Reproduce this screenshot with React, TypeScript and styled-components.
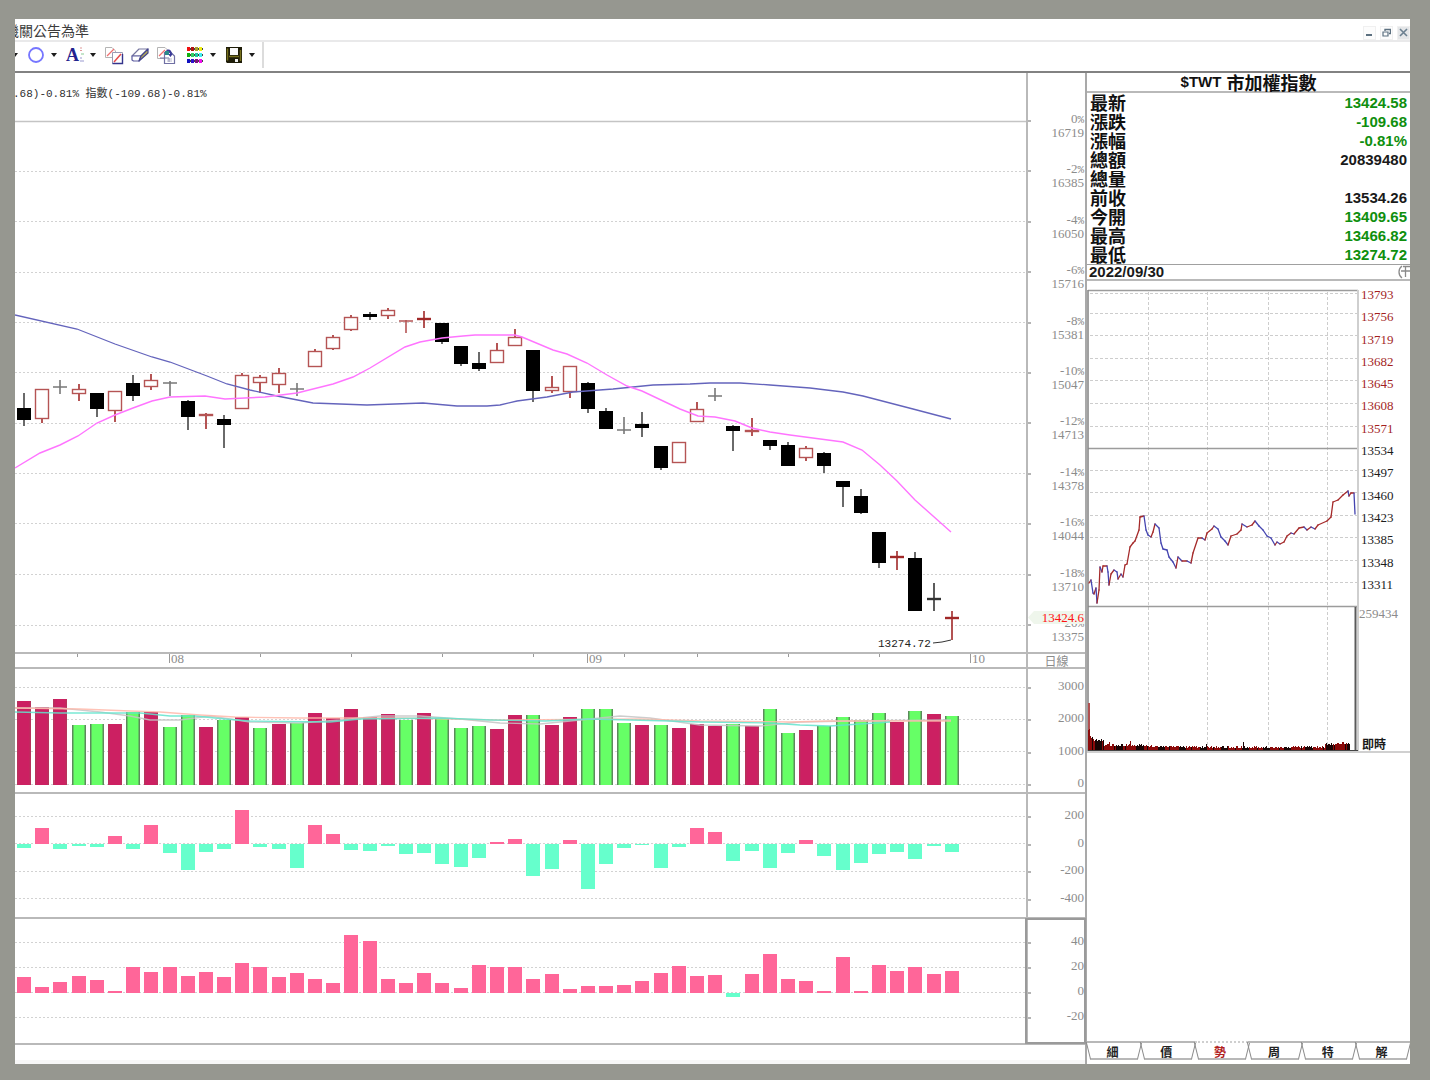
import React from "react";
import styled, { createGlobalStyle } from "styled-components";

const SANS = '"Liberation Sans", "Noto Sans CJK TC", sans-serif';
const SERIF = '"Liberation Serif", "Noto Sans CJK TC", serif';
const MONO = '"Liberation Mono", "Noto Sans CJK TC", monospace';
const CJK = '"Noto Sans CJK TC", sans-serif';

const LINE = "#b9b9b9";
const DIM = "#8c8c8c";
const GRID = "#d2d2d2";
const RED = "#a52a2a";

const GlobalStyle = createGlobalStyle`
  *, *::before, *::after { box-sizing: border-box; }
  body { margin: 0; background: #969790; font-family: ${SANS}; }
  button { appearance: none; border: 0; margin: 0; padding: 0; background: none; font: inherit; color: inherit; }
`;

const Desktop = styled.div`
  min-height: 100vh;
  padding: 19px 20px 16px 15px;
  display: flex;
  background: #969790;
`;

const Window = styled.main`
  flex: 1;
  min-width: 0;
  display: flex;
  flex-direction: column;
  overflow: hidden;
  background: #fff;
`;

const TitleBar = styled.header`
  height: 23px;
  display: flex;
  align-items: center;
  justify-content: space-between;
  border-bottom: 2px solid #e9e9ea;
`;

const TitleText = styled.div`
  width: 74px;
  display: flex;
  justify-content: flex-end;
  overflow: hidden;
  white-space: nowrap;
  font: 14px/20px ${CJK};
  color: #3c3c3c;
`;

const WindowButtons = styled.div`
  display: flex;
  gap: 4px;
  padding-top: 6px;
`;

const WindowButton = styled.button<{ $shaded?: boolean }>`
  width: 13px;
  height: 14px;
  display: grid;
  place-items: center;
  border: 1px solid #f0f0f0;
  background: ${(p) => (p.$shaded ? "#e4e6e8" : "#fcfcfc")};
`;

const Toolbar = styled.div`
  height: 31px;
  display: flex;
  align-items: center;
  gap: 3px;
  padding-bottom: 4px;
  border-bottom: 2px solid #828282;
`;

const ToolGroup = styled.div`
  display: flex;
  align-items: center;
`;

const ToolButton = styled.button`
  width: 26px;
  height: 20px;
  display: grid;
  place-items: center;
`;

const CaretButton = styled.button<{ $cut?: boolean }>`
  width: 10px;
  height: 20px;
  display: grid;
  place-items: center;
  margin-left: ${(p) => (p.$cut ? "-5px" : "0")};
`;

const ToolDivider = styled.div`
  width: 2px;
  height: 26px;
  margin-left: 2px;
  background: #dcdcdc;
`;

const Body = styled.div`
  flex: 1;
  display: flex;
`;

const Charts = styled.section`
  flex: 1;
  min-width: 0;
  display: flex;
  flex-direction: column;
`;

const Pane = styled.div<{ $h: number }>`
  height: ${(p) => p.$h}px;
  display: flex;
  border-bottom: 2px solid ${LINE};
`;

const Plot = styled.div`
  position: relative;
  flex: 1;
  min-width: 0;
  display: flex;
  justify-content: flex-end;
  overflow-x: clip;
  overflow-y: visible;
  svg { flex: none; display: block; overflow: visible; }
`;

const Caption = styled.div`
  position: absolute;
  left: -2px;
  top: 13px;
  white-space: nowrap;
  font: 11px/16px ${MONO};
  color: #303030;
`;

const Axis = styled.div<{ $top: number; $focus?: boolean }>`
  position: relative;
  width: 59px;
  flex: none;
  padding-top: ${(p) => p.$top}px;
  border-left: 2px solid ${LINE};
  ${(p) => p.$focus && `outline: 2px solid #9a9a9a; outline-offset: -1px;`}
`;

const AxisLabels = styled.div<{ $h: number }>`
  height: ${(p) => p.$h}px;
  display: flex;
  flex-direction: column;
  justify-content: space-between;
  text-align: right;
  font: 13px/14px ${SERIF};
  color: ${DIM};
`;

const AxisLabel = styled.div`
  position: relative;
  padding-right: 1px;
  &::before {
    content: "";
    position: absolute;
    left: 0;
    top: 8px;
    width: 3px;
    height: 2px;
    background: #b4b4b4;
  }
`;

const PercentValue = styled.div`
  height: 14px;
`;

const Percent = styled.span`
  font: 11px/11px ${MONO};
`;

const PriceTag = styled.div`
  position: absolute;
  left: 0;
  right: 0;
  top: 538px;
  height: 13px;
  padding-right: 1px;
  text-align: right;
  font: 13px/13px ${SERIF};
  color: #ff1414;
  background: #eff6ec;
  clip-path: polygon(0 50%, 6px 0, 100% 0, 100% 100%, 6px 100%);
`;

const PeriodCell = styled.div`
  width: 59px;
  flex: none;
  text-align: center;
  border-left: 2px solid ${LINE};
  font: 12px/13px ${CJK};
  color: ${DIM};
`;

const StatusStrip = styled.div`
  flex: 1;
  border-bottom: 4px solid #f7f7f7;
`;

const SidePanel = styled.aside`
  width: 325px;
  flex: none;
  display: flex;
  flex-direction: column;
  border-left: 2px solid #a9a9a9;
`;

const SymbolTitle = styled.h1`
  height: 20px;
  margin: 0;
  display: flex;
  align-items: center;
  justify-content: center;
  gap: 5px;
  border-bottom: 2px solid ${LINE};
  font: bold 15px/18px ${SANS};
  color: #111;
`;

const SymbolName = styled.span`
  font: bold 18px/18px ${CJK};
`;

const QuoteTable = styled.table`
  width: 100%;
  border-collapse: collapse;
`;

const QuoteLabel = styled.th`
  height: 19px;
  padding: 0 0 0 3px;
  text-align: left;
  font: bold 18px/19px ${CJK};
  color: #111;
`;

const QuoteValue = styled.td<{ $down?: boolean }>`
  padding: 0 3px 0 0;
  text-align: right;
  font: bold 15px/19px ${SANS};
  color: ${(p) => (p.$down ? "#0e8f0e" : "#1a1a1a")};
`;

const DateRow = styled.div`
  height: 17px;
  display: flex;
  align-items: center;
  justify-content: space-between;
  padding-left: 2px;
  overflow: hidden;
  border-top: 1px solid #a0a0a0;
  border-bottom: 2px solid ${LINE};
  font: bold 15px/14px ${SANS};
  color: #1a1a1a;
`;

const Intraday = styled.div`
  display: flex;
  border-bottom: 2px solid #d0d0d0;
  svg { flex: none; display: block; }
`;

const IntradayScale = styled.div`
  flex: 1;
  display: flex;
  flex-direction: column;
  justify-content: space-between;
  padding-top: 7px;
  font: 13px/14px ${SERIF};
`;

const PriceScale = styled.div`
  height: 304px;
  display: flex;
  flex-direction: column;
  justify-content: space-between;
  padding-left: 2px;
`;

const PriceMark = styled.div<{ $up?: boolean }>`
  color: ${(p) => (p.$up ? "#a31f1f" : "#1c1c1c")};
`;

const VolumeScale = styled.div`
  height: 144px;
  display: flex;
  flex-direction: column;
  justify-content: space-between;
  color: ${DIM};
`;

const LiveTag = styled.div`
  padding-left: 3px;
  font: bold 12px/14px ${CJK};
  color: #1a1a1a;
`;

const Tabs = styled.nav`
  display: flex;
  margin-top: auto;
  margin-bottom: 4px;
`;

const Tab = styled.button<{ $active?: boolean }>`
  position: relative;
  flex: 1;
  height: 19px;
  padding-right: 3px;
  border-top: 2px ${(p) => (p.$active ? "dotted #cfcfcf" : "solid #b8b8b8")};
  font: bold 12px/14px ${CJK};
  color: ${(p) => (p.$active ? "#b02020" : "#222")};
  &::before, &::after {
    content: "";
    position: absolute;
    top: -1px;
    bottom: 0;
    border-bottom: 2px solid #b8b8b8;
  }
  &::before {
    left: 1px;
    right: 50%;
    border-left: 1px solid #8a8a8a;
    transform: skewX(14deg);
  }
  &::after {
    right: 1px;
    left: 50%;
    border-right: 1px solid #8a8a8a;
    transform: skewX(-14deg);
  }
`;

/* ---------- data ---------- */

const barX = (i: number) => Math.round(24 + i * 18.19);

// kind, high, body top, body bottom, low
type Candle = [string, number, number, number, number];
const candles: Candle[] = [
  ["k", 393, 408, 420, 426], ["r", 389, 389, 419, 423], ["g", 380, 387, 387, 394], ["r", 384, 389, 394, 401],
  ["k", 393, 393, 409, 417], ["r", 391, 391, 411, 422], ["k", 375, 383, 396, 401], ["r", 374, 380, 387, 390],
  ["g", 381, 383, 383, 396], ["k", 400, 401, 417, 430], ["r", 413, 414, 416, 429], ["k", 415, 419, 425, 448],
  ["r", 373, 375, 409, 409], ["r", 375, 377, 383, 393], ["r", 368, 373, 385, 393], ["g", 383, 389, 389, 396],
  ["r", 349, 351, 367, 367], ["r", 335, 337, 349, 350], ["r", 315, 317, 330, 331], ["k", 312, 314, 317, 320],
  ["r", 308, 310, 316, 319], ["m", 320, 321, 321, 333], ["c", 311, 319, 319, 328], ["k", 323, 323, 342, 344],
  ["k", 346, 346, 364, 366], ["k", 352, 363, 369, 371], ["r", 343, 350, 363, 363], ["r", 329, 337, 346, 346],
  ["k", 350, 350, 391, 402], ["r", 376, 387, 391, 393], ["r", 366, 366, 392, 398], ["k", 382, 383, 409, 413],
  ["k", 408, 411, 429, 429], ["g", 417, 430, 430, 434], ["k", 412, 424, 428, 437], ["k", 446, 446, 468, 470],
  ["r", 442, 442, 463, 463], ["r", 402, 409, 422, 422], ["g", 388, 396, 396, 401], ["k", 425, 426, 431, 451],
  ["r", 418, 430, 432, 436], ["k", 440, 440, 446, 450], ["k", 442, 445, 466, 466], ["r", 446, 448, 458, 461],
  ["k", 452, 453, 466, 473], ["k", 481, 481, 487, 507], ["k", 489, 496, 513, 514], ["k", 532, 532, 563, 568],
  ["c", 551, 557, 557, 570], ["k", 552, 558, 611, 611], ["b", 583, 599, 599, 611], ["c", 611, 618, 618, 640],
];

const maLong = "15,315 77,329 115,344 152,357 170,362 207,376 227,384 250,390 277,396 313,403 367,405 423,403 457,406 487,406 500,405 517,401 547,397 573,392 613,389 633,387 653,385 690,384 710,383 740,383 770,385 810,388 843,392 863,396 913,409 951,419";
const maShort = "15,468 40,453 60,445 78,436 97,423 115,415 133,408 152,401 170,397 205,396 225,399 245,398 265,397 297,393 333,384 353,377 370,368 405,347 420,342 442,338 463,336 475,335 515,335 522,337 553,350 567,354 587,363 607,375 627,386 642,391 680,409 698,416 715,417 735,421 752,428 770,432 790,435 843,442 862,450 880,465 897,481 915,500 951,532";

const volumeTops = [701, 707, 699, 725, 724, 724, 712, 712, 727, 715, 727, 720, 717, 728, 724, 723, 713, 718, 709, 717, 714, 720, 713, 718, 728, 726, 729, 715, 715, 725, 717, 709, 709, 723, 725, 725, 728, 724, 726, 724, 726, 709, 733, 730, 726, 717, 720, 713, 722, 711, 714, 716];
const volumeKinds = "RRRGGRGRGGRGRGRGRRRRRGRGGGRRGRRGGGRGRRRGRGGRGGGGRGRG";

const netFlow = [-4, 16, -5, -2, -3, 8, -5, 19, -9, -26, -8, -5, 34, -3, -5, -24, 19, 10, -6, -7, -2, -10, -9, -20, -23, -14, 2, 5, -32, -25, 4, -45, -20, -4, -1, -24, -3, 16, 12, -17, -7, -24, -9, 4, -12, -26, -19, -10, -8, -15, -2, -8];
const margin = [16, 6, 11, 17, 13, 2, 26, 21, 26, 17, 21, 16, 30, 26, 16, 20, 14, 10, 58, 52, 14, 10, 20, 10, 5, 28, 26, 26, 14, 19, 4, 7, 7, 8, 12, 20, 27, 17, 18, -4, 19, 39, 14, 12, 2, 36, 2, 28, 22, 26, 19, 22];

const priceAxis: [string, string][] = [
  ["0", "16719"], ["-2", "16385"], ["-4", "16050"], ["-6", "15716"], ["-8", "15381"], ["-10", "15047"],
  ["-12", "14713"], ["-14", "14378"], ["-16", "14044"], ["-18", "13710"], ["-20", "13375"],
];

const quotes: { label: string; value: string; down?: boolean }[] = [
  { label: "最新", value: "13424.58", down: true },
  { label: "漲跌", value: "-109.68", down: true },
  { label: "漲幅", value: "-0.81%", down: true },
  { label: "總額", value: "20839480" },
  { label: "總量", value: "" },
  { label: "前收", value: "13534.26" },
  { label: "今開", value: "13409.65", down: true },
  { label: "最高", value: "13466.82", down: true },
  { label: "最低", value: "13274.72", down: true },
];

const intradayMarks = [13793, 13756, 13719, 13682, 13645, 13608, 13571, 13534, 13497, 13460, 13423, 13385, 13348, 13311];

const intradayPath: [number, number][] = [
  [1089, 583], [1091, 580], [1093, 593], [1094, 594], [1096, 588], [1097, 603], [1099, 590], [1100, 567], [1102, 572], [1103, 566],
  [1107, 566], [1108, 572], [1109, 585], [1111, 574], [1114, 570], [1117, 572], [1118, 579], [1121, 574], [1123, 577], [1125, 565],
  [1127, 564], [1130, 547], [1133, 543], [1135, 541], [1139, 530], [1140, 517], [1144, 516], [1146, 530], [1148, 535], [1151, 537],
  [1153, 532], [1155, 524], [1159, 528], [1161, 543], [1163, 549], [1167, 550], [1169, 557], [1173, 562], [1176, 568], [1178, 557],
  [1182, 561], [1187, 561], [1191, 563], [1193, 553], [1198, 538], [1202, 538], [1205, 540], [1207, 533], [1212, 529], [1214, 526],
  [1218, 529], [1221, 537], [1225, 541], [1228, 545], [1231, 536], [1237, 534], [1241, 530], [1242, 524], [1247, 527], [1252, 525],
  [1255, 521], [1259, 526], [1263, 530], [1267, 536], [1271, 538], [1275, 545], [1277, 542], [1280, 544], [1284, 542], [1287, 536],
  [1291, 533], [1294, 534], [1299, 528], [1304, 527], [1307, 530], [1311, 527], [1315, 529], [1318, 525], [1327, 521], [1331, 517],
  [1333, 502], [1338, 500], [1343, 495], [1348, 491], [1349, 496], [1351, 493], [1354, 493], [1355, 514],
];

const tickVolume = Array.from({ length: 262 }, (_, i) => {
  const noise = (i * 37 + ((i * i) % 23) * 11) % 5;
  const opening = i < 2 ? 20 : i < 6 ? 15 - i : i < 16 ? 9 : i < 60 ? 4 : i < 90 ? 3 : 2;
  const closing = i > 250 ? 4 : i > 236 ? 3 : 0;
  const spike = i === 155 ? 5 : i === 118 ? 4 : i === 42 ? 5 : i === 21 ? 4 : 0;
  return opening + closing + spike + Math.floor(noise / 2);
});

/* ---------- drawings ---------- */

const Grid = ({ ys }: { ys: number[] }) => (
  <g stroke={GRID} strokeDasharray="2 2">
    {ys.map((y) => <line key={y} x1={-2985} x2={1026} y1={y + 0.5} y2={y + 0.5} />)}
  </g>
);

const CandleMark = ({ x, c }: { x: number; c: Candle }) => {
  const [kind, high, top, bottom, low] = c;
  if (kind === "k")
    return (
      <g>
        <rect x={x - 1} y={high} width={2} height={low - high} fill="#6a6a6a" />
        <rect x={x - 7} y={top} width={14} height={bottom - top} />
      </g>
    );
  if (kind === "r")
    return (
      <g stroke="#b55454" fill="none">
        <path strokeWidth={2} d={`M${x} ${high}V${top}M${x} ${bottom}V${low}`} />
        <rect x={x - 6.5} y={top + 0.5} width={13} height={bottom - top - 1} strokeWidth={1.4} fill="#fff" />
      </g>
    );
  const color = kind === "g" ? "#777" : kind === "b" ? "#333" : kind === "m" ? "#b55454" : "#a02828";
  const bar = kind === "g" || kind === "m" ? 1.5 : 2.4;
  return (
    <g stroke={color} fill="none">
      <path strokeWidth={1.6} d={`M${x} ${high}V${low}`} />
      <path strokeWidth={bar} d={`M${x - 7} ${top}H${x + 7}`} />
    </g>
  );
};

const PriceChart = () => (
  <svg width={1011} height={579} viewBox="15 73 1011 579" role="img" aria-label="指數">
    <line x1={-2985} x2={1026} y1={121.5} y2={121.5} stroke="#c4c4c4" strokeWidth={1.5} />
    <Grid ys={[171, 221, 272, 322, 372, 423, 473, 523, 574, 625]} />
    {candles.map((c, i) => <CandleMark key={i} x={barX(i)} c={c} />)}
    <polyline points={maLong} fill="none" stroke="#6464bc" strokeWidth={1.3} />
    <polyline points={maShort} fill="none" stroke="#ff74ff" strokeWidth={1.4} />
    <path d="M933 643L942 642L951 640" fill="none" stroke="#333" />
    <text x={878} y={647} fontFamily={MONO} fontSize={11} fill="#222">13274.72</text>
  </svg>
);

const DateAxis = () => (
  <svg width={1011} height={13} viewBox="15 654 1011 13" aria-hidden="true">
    <path d="M77.5 654v3M260.5 654v3M351.5 654v3M442.5 654v3M533.5 654v3M624.5 654v3M697.5 654v3M788.5 654v3M879.5 654v3M169.5 654v9M587.5 654v9M970.5 654v9" stroke="#9a9a9a" />
    <g fontFamily={SERIF} fontSize={13} fill={DIM}>
      <text x={171} y={663}>08</text>
      <text x={589} y={663}>09</text>
      <text x={972} y={663}>10</text>
    </g>
  </svg>
);

const VolumeChart = () => (
  <svg width={1011} height={123} viewBox="15 669 1011 123" role="img" aria-label="成交量">
    <Grid ys={[687, 719, 751, 784]} />
    {volumeTops.map((y, i) => {
      const x = barX(i);
      const green = volumeKinds[i] === "G";
      return (
        <g key={i}>
          <rect x={x - 7} y={y} width={14} height={785 - y} fill={green ? "#5c8a5c" : "#b8325c"} />
          <rect x={x - 5.5} y={y} width={11} height={785 - y} fill={green ? "#66ff66" : "#cc2062"} />
        </g>
      );
    })}
    <g fill="none" strokeWidth={1.3} strokeOpacity={0.85}>
      <polyline stroke="#c4c4c4" points="15,708 60,708 100,712 130,716 150,720 180,720 210,716 250,722 300,723 340,720 380,716 420,716 460,719 500,723 540,724 590,719 620,716 650,718 700,725 760,726 800,722 850,721 951,720" />
      <polyline stroke="#ffb9aa" points="15,708 80,709 130,711 160,712 200,715 235,717 300,718 400,718 500,720 640,719 700,721 790,722 830,721 900,721 951,721" />
      <polyline stroke="#62e4cc" points="15,712 60,713 140,713 170,716 195,716 225,719 250,721 330,722 360,719 440,718 490,720 545,721 590,719 670,721 700,722 770,723 800,725 830,726 860,724 890,722" />
    </g>
  </svg>
);

const Histogram = ({ top, height, zero, values, grid, label }: { top: number; height: number; zero: number; values: number[]; grid: number[]; label: string }) => (
  <svg width={1011} height={height} viewBox={`15 ${top} 1011 ${height}`} role="img" aria-label={label}>
    <Grid ys={grid} />
    {values.map((v, i) => (
      <rect key={i} x={barX(i) - 7} y={v > 0 ? zero - v : zero} width={14} height={Math.abs(v)} fill={v > 0 ? "#ff6699" : "#66ffcc"} />
    ))}
  </svg>
);

const IntradayChart = () => (
  <svg width={272} height={470} viewBox="1087 281 272 470" role="img" aria-label="即時走勢">
    <g stroke="#cdcdcd" strokeDasharray="3 2">
      {[293, 313, 335, 358, 380, 403, 426, 470, 492, 515, 537, 560, 582].map((y) => (
        <line key={y} x1={1090} x2={1358} y1={y + 0.5} y2={y + 0.5} />
      ))}
      {[1148, 1207, 1268, 1327].map((x) => <line key={x} x1={x + 0.5} x2={x + 0.5} y1={292} y2={750} />)}
    </g>
    <path d="M1088 290.5H1358M1088 448.5H1358M1088 606.5H1358" stroke="#9c9c9c" strokeWidth={1.4} />
    <path d="M1088 290V751" stroke="#8a8a8a" strokeWidth={1.6} />
    <path d="M1358 290V751" stroke="#cfcfcf" strokeWidth={2} />
    <path d="M1355.5 607V751" stroke="#5a5a5a" strokeWidth={2} />
    <g strokeWidth={1.3} strokeLinecap="round">
      {intradayPath.slice(1).map(([x, y], i) => {
        const [px, py] = intradayPath[i];
        return <line key={i} x1={px} y1={py} x2={x} y2={y} stroke={y > py ? "#4444b0" : RED} />;
      })}
    </g>
    <rect x={1088} y={703} width={2} height={48} fill="#b05050" />
    {tickVolume.map((h, i) => (
      <rect key={i} x={1088 + i} y={750 - h} width={1} height={h + 1} fill={Math.floor(i / 7) % 3 === 1 || i % 11 === 4 ? "#1a0505" : "#8b0a0a"} />
    ))}
    <path d="M1088 750.5H1358" stroke="#444" />
  </svg>
);

const Caret = () => (
  <svg width="6" height="4" viewBox="0 0 6 4"><path d="M0 0H6L3 4Z" fill="#1c1c1c" /></svg>
);

const EllipseIcon = () => (
  <svg width="18" height="18" viewBox="0 0 18 18"><circle cx="9" cy="9" r="7" fill="none" stroke="#7676ff" strokeWidth="1.8" /></svg>
);

const TextIcon = () => (
  <svg width="20" height="18" viewBox="0 0 20 18">
    <text x="1" y="15" fontFamily={SERIF} fontWeight="bold" fontSize="18" fill="#23238e">A</text>
    <path d="M15 2h2M15 4.500h2" stroke="#e09a9a" strokeWidth="1.200" />
    <path d="M16 8h3" stroke="#9cd4a6" strokeWidth="1.200" />
    <path d="M15 12h2M15 15h4" stroke="#9a9ad0" strokeWidth="1.200" />
  </svg>
);

const CopyLinesIcon = () => (
  <svg width="20" height="20" viewBox="0 0 20 20" fill="none">
    <path d="M1.5 2.5H8L11.5 6V12.5H1.5Z" fill="#fff" stroke="#b4b4b4" />
    <path d="M3 11L10 4" stroke="#f07070" strokeWidth="1.3" />
    <path d="M8.5 7.5H15L18.500 7.500V18.500H8.500Z" fill="#fff" stroke="#9a9ab4" />
    <path d="M8.500 18.500H18.500V9" stroke="#34348c" strokeWidth="1.4" />
    <path d="M10 17L17 9" stroke="#e84a4a" strokeWidth="1.5" />
  </svg>
);

const EraserIcon = () => (
  <svg width="20" height="18" viewBox="0 0 20 18" strokeLinejoin="round">
    <path d="M2 10L9 3H18L11 10Z" fill="#fff" stroke="#7676a0" strokeWidth="1.200" />
    <path d="M2 10H11L9 15H3.500L2 14Z" fill="#fff" stroke="#5c5ca0" strokeWidth="1.200" />
    <path d="M11 10L18 3V7L9 15Z" fill="#b4ac58" stroke="#44448c" strokeWidth="1.200" />
  </svg>
);

const PageIcon = () => (
  <svg width="20" height="20" viewBox="0 0 20 20" fill="none">
    <path d="M1.500 2.500H9L12.500 6V13.500H1.500Z" fill="#fff" stroke="#b4b4b4" />
    <path d="M3 11L9 5" stroke="#f07070" strokeWidth="1.300" />
    <path d="M8.500 7.500H15L18.500 11V18.500H8.500Z" fill="#fff" stroke="#7070a4" strokeWidth="1.200" />
    <path d="M4 13H13V17" stroke="#7070a4" />
    <path d="M10 6C12 3 16 5 16 9L17 8.500L14.500 12L12 9L14 9C14 7 12 7 10 8Z" fill="#3a3a98" />
    <rect x="9" y="6" width="4" height="4" fill="#2a8a8a" />
    <path d="M11 14H16M11 16H16" stroke="#b8b8cc" />
  </svg>
);

const palette = ["#f01010", "#b01010", "#a8a030", "#f0f010", "#10b010", "#30d060", "#20c8a0", "#40f0f0", "#1010c0", "#3010d0", "#801080", "#f010f0"];
const PaletteIcon = () => (
  <svg width="18" height="18" viewBox="0 0 18 18">
    {[0, 1, 2].map((r) => <rect key={r} x="1" y={2 + r * 6} width="16" height="2" fill="#444" />)}
    {palette.map((c, i) => <rect key={c} x={1 + (i % 4) * 4} y={1 + Math.floor(i / 4) * 6} width="3" height="4" fill={c} />)}
  </svg>
);

const SaveIcon = () => (
  <svg width="18" height="18" viewBox="0 0 18 18">
    <path d="M1 1H17V17H2L1 16Z" fill="#1e1c08" />
    <path d="M2.500 2.500V14.500M15.500 4V15" stroke="#76701c" strokeWidth="1.500" />
    <rect x="5" y="2" width="8" height="7" fill="#fafafa" />
    <path d="M4 10.500H14" stroke="#76701c" strokeWidth="1.500" />
    <rect x="10" y="13" width="3" height="3" fill="#f0f0f0" />
  </svg>
);

const ScalePercent = ({ value }: { value: string }) => <PercentValue>{value}<Percent>%</Percent></PercentValue>;

const ValueAxis = ({ top, height, labels, focus }: { top: number; height: number; labels: string[]; focus?: boolean }) => (
  <Axis $top={top} $focus={focus}>
    <AxisLabels $h={height}>
      {labels.map((l) => <AxisLabel key={l}>{l}</AxisLabel>)}
    </AxisLabels>
  </Axis>
);

export default function App() {
  return (
    <Desktop>
      <GlobalStyle />
      <Window>
        <TitleBar>
          <TitleText>機關公告為準</TitleText>
          <WindowButtons>
            <WindowButton aria-label="最小化">
              <svg width="9" height="9" viewBox="0 0 9 9"><path d="M1 7H7" stroke="#5c7080" strokeWidth="2" /></svg>
            </WindowButton>
            <WindowButton aria-label="還原">
              <svg width="9" height="9" viewBox="0 0 9 9" fill="none" stroke="#5c7080"><path d="M3 3V1.500H8.500V5.500H7" strokeWidth="1.400" /><path d="M1 4H6V8H1Z" strokeWidth="1.200" /></svg>
            </WindowButton>
            <WindowButton aria-label="關閉" $shaded>
              <svg width="9" height="9" viewBox="0 0 9 9"><path d="M1 1L8 8M8 1L1 8" stroke="#6c8090" strokeWidth="1.600" /></svg>
            </WindowButton>
          </WindowButtons>
        </TitleBar>

        <Toolbar>
          <CaretButton $cut aria-label="線段選單"><Caret /></CaretButton>
          <ToolGroup>
            <ToolButton aria-label="圓形"><EllipseIcon /></ToolButton>
            <CaretButton aria-label="圓形選單"><Caret /></CaretButton>
          </ToolGroup>
          <ToolGroup>
            <ToolButton aria-label="文字"><TextIcon /></ToolButton>
            <CaretButton aria-label="文字選單"><Caret /></CaretButton>
          </ToolGroup>
          <ToolGroup>
            <ToolButton aria-label="複製"><CopyLinesIcon /></ToolButton>
            <ToolButton aria-label="清除"><EraserIcon /></ToolButton>
            <ToolButton aria-label="還原畫線"><PageIcon /></ToolButton>
          </ToolGroup>
          <ToolGroup>
            <ToolButton aria-label="顏色"><PaletteIcon /></ToolButton>
            <CaretButton aria-label="顏色選單"><Caret /></CaretButton>
          </ToolGroup>
          <ToolGroup>
            <ToolButton aria-label="儲存"><SaveIcon /></ToolButton>
            <CaretButton aria-label="儲存選單"><Caret /></CaretButton>
          </ToolGroup>
          <ToolDivider />
        </Toolbar>

        <Body>
          <Charts>
            <Pane $h={581}>
              <Plot>
                <PriceChart />
                <Caption>.68)-0.81% 指數(-109.68)-0.81%</Caption>
              </Plot>
              <Axis $top={39}>
                <AxisLabels $h={532}>
                  {priceAxis.map(([pct, price]) => (
                    <AxisLabel key={price}>
                      <ScalePercent value={pct} />
                      <div>{price}</div>
                    </AxisLabel>
                  ))}
                </AxisLabels>
                <PriceTag>13424.6</PriceTag>
              </Axis>
            </Pane>
            <Pane $h={15}>
              <Plot><DateAxis /></Plot>
              <PeriodCell>日線</PeriodCell>
            </Pane>
            <Pane $h={125}>
              <Plot><VolumeChart /></Plot>
              <ValueAxis top={10} height={111} labels={["3000", "2000", "1000", "0"]} />
            </Pane>
            <Pane $h={125}>
              <Plot><Histogram top={794} height={123} zero={844} values={netFlow} grid={[816, 843, 871, 898]} label="買賣超" /></Plot>
              <ValueAxis top={14} height={97} labels={["200", "0", "-200", "-400"]} />
            </Pane>
            <Pane $h={126}>
              <Plot><Histogram top={919} height={124} zero={993} values={margin} grid={[942, 967, 992, 1017]} label="增減" /></Plot>
              <ValueAxis focus top={15} height={89} labels={["40", "20", "0", "-20"]} />
            </Pane>
            <StatusStrip />
          </Charts>

          <SidePanel>
            <SymbolTitle>$TWT<SymbolName>市加權指數</SymbolName></SymbolTitle>
            <QuoteTable>
              <tbody>
                {quotes.map((q) => (
                  <tr key={q.label}>
                    <QuoteLabel scope="row">{q.label}</QuoteLabel>
                    <QuoteValue $down={q.down}>{q.value}</QuoteValue>
                  </tr>
                ))}
              </tbody>
            </QuoteTable>
            <DateRow>
              2022/09/30
              <svg width="13" height="14" viewBox="0 0 13 14" fill="none" stroke="#8a8a8a" strokeWidth="1.300">
                <path d="M5 1C1 4 1 10 5 13M4 6H13M8.500 1V12M6 1.500H13" />
              </svg>
            </DateRow>
            <Intraday>
              <IntradayChart />
              <IntradayScale>
                <PriceScale>
                  {intradayMarks.map((m) => <PriceMark key={m} $up={m > 13534}>{m}</PriceMark>)}
                </PriceScale>
                <VolumeScale>
                  259434
                  <LiveTag>即時</LiveTag>
                </VolumeScale>
              </IntradayScale>
            </Intraday>
            <Tabs aria-label="檢視">
              {["細", "價", "勢", "周", "特", "解"].map((t) => <Tab key={t} $active={t === "勢"}>{t}</Tab>)}
            </Tabs>
          </SidePanel>
        </Body>
      </Window>
    </Desktop>
  );
}
